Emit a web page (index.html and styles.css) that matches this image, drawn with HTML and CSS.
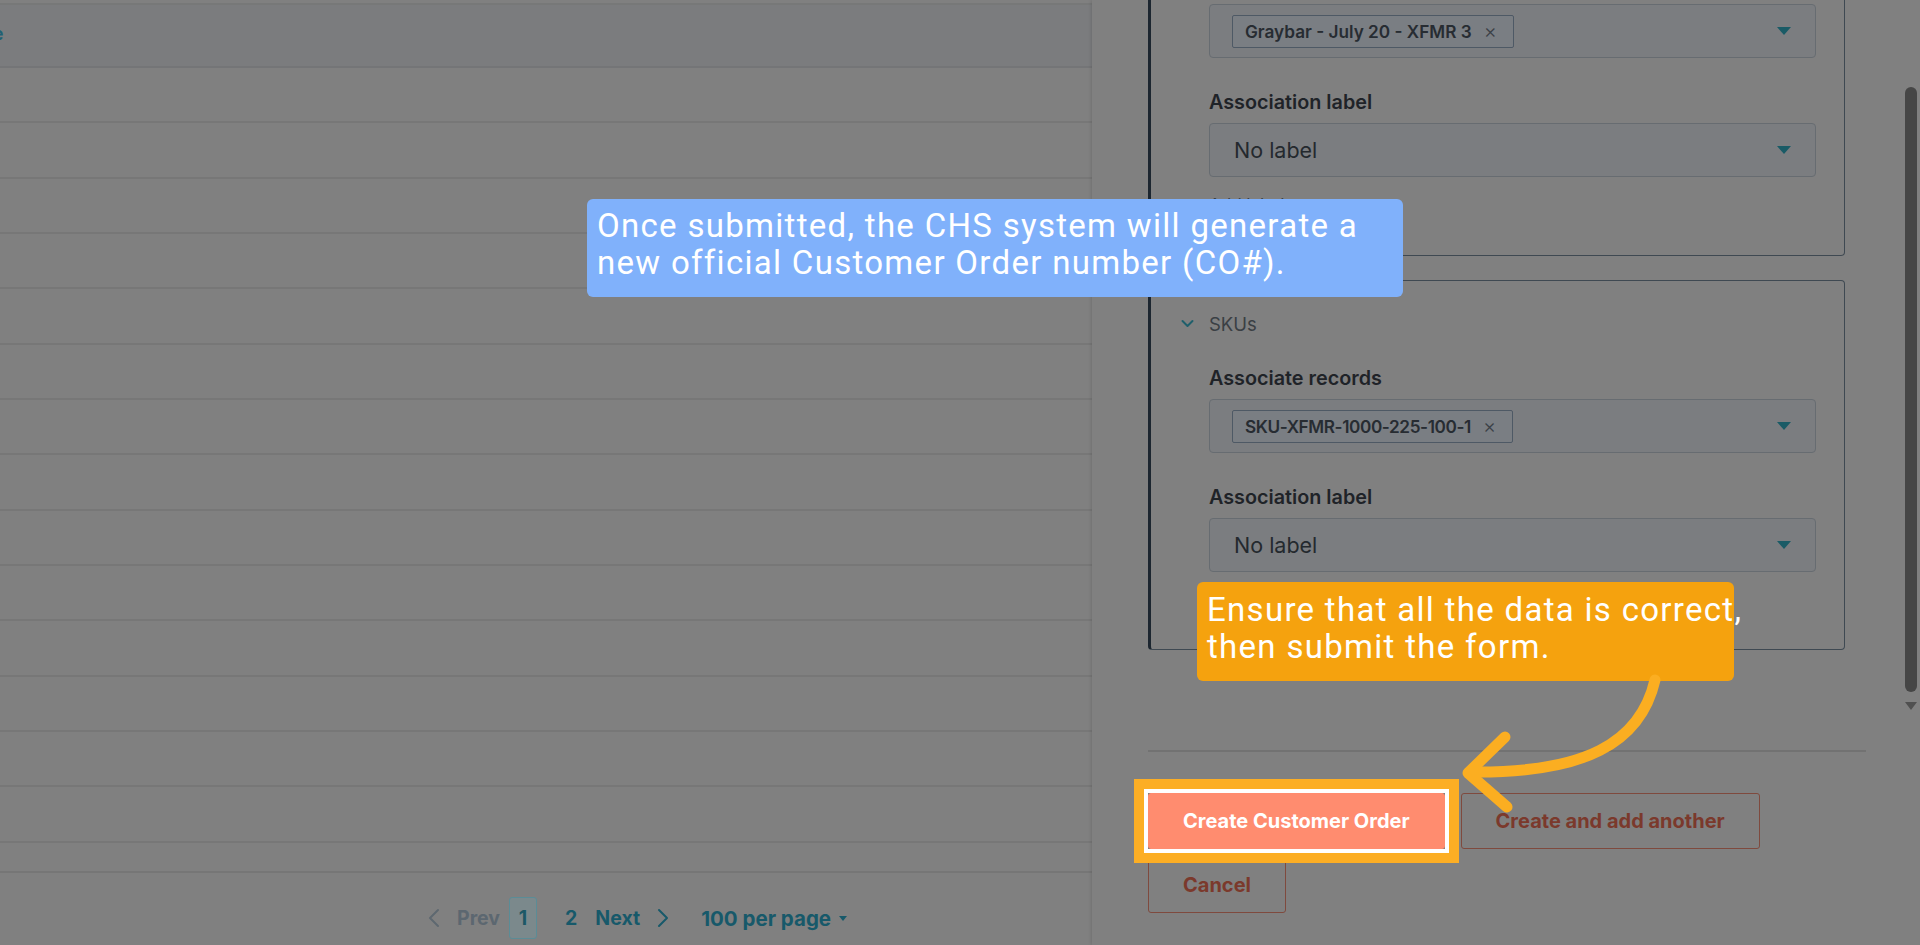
FILE: index.html
```html
<!DOCTYPE html>
<html lang="en">
<head>
<meta charset="utf-8">
<title>Create Customer Order</title>
<link rel="stylesheet" href="styles.css">
</head>
<body>
<div class="app">
  <main class="main">
    <div class="table">
      <div class="thead"><span class="th-cut">Name</span></div>
      <div class="row"></div><div class="row"></div><div class="row"></div><div class="row"></div>
      <div class="row"></div><div class="row"></div><div class="row"></div><div class="row"></div>
      <div class="row"></div><div class="row"></div><div class="row"></div><div class="row"></div>
      <div class="row"></div><div class="row"></div><div class="row"></div>
    </div>
    <nav class="pager">
      <svg class="chev chev-prev" viewBox="0 0 12 20" width="12" height="20"><path d="M10 2 L2 10 L10 18" fill="none" stroke="currentColor" stroke-width="2" stroke-linecap="round" stroke-linejoin="round"/></svg>
      <span class="pg-prev">Prev</span>
      <span class="pg-cur">1</span>
      <span class="pg-num">2</span>
      <span class="pg-next">Next</span>
      <svg class="chev chev-next" viewBox="0 0 12 20" width="12" height="20"><path d="M2 2 L10 10 L2 18" fill="none" stroke="currentColor" stroke-width="2" stroke-linecap="round" stroke-linejoin="round"/></svg>
      <span class="pg-size">100 per page</span>
      <span class="caret-sm"></span>
    </nav>
  </main>

  <aside class="panel">
    <div class="panel-body">
      <div class="scroll">
        <section class="assoc assoc-cut">
          <div class="select">
            <span class="tag">Graybar - July 20 - XFMR 3<span class="tag-x">×</span></span>
            <span class="tri"></span>
          </div>
          <div class="field-label">Association label</div>
          <div class="select">
            <span class="sel-text">No label</span>
            <span class="tri"></span>
          </div>
          <div class="sub-link">Add label</div>
        </section>

        <section class="assoc">
          <div class="assoc-head"><svg class="chev-down" viewBox="0 0 14 10" width="14" height="10"><path d="M2 2 L7 7 L12 2" fill="none" stroke="currentColor" stroke-width="2" stroke-linecap="round" stroke-linejoin="round"/></svg><span>SKUs</span></div>
          <div class="field-label first">Associate records</div>
          <div class="select">
            <span class="tag tag-sku">SKU-XFMR-1000-225-100-1<span class="tag-x">×</span></span>
            <span class="tri"></span>
          </div>
          <div class="field-label">Association label</div>
          <div class="select">
            <span class="sel-text">No label</span>
            <span class="tri"></span>
          </div>
          <div class="sub-spacer"></div>
        </section>
      </div>
      <div class="scrollbar">
        <div class="thumb"></div>
        <div class="sb-arrow"></div>
      </div>
    </div>
    <footer class="panel-foot">
      <div class="sep"></div>
      <div class="actions">
        <span class="hl"><button class="btn btn-primary">Create Customer Order</button></span>
        <button class="btn btn-secondary">Create and add another</button>
        <button class="btn btn-secondary">Cancel</button>
      </div>
    </footer>
  </aside>
</div>

<div class="tip tip-blue">Once submitted, the CHS system will generate a<br>new official Customer Order number (CO#).</div>
<div class="tip tip-orange">Ensure that all the data is correct,<br>then submit the form.</div>

<svg class="arrow" viewBox="1440 660 240 170" width="240" height="170">
  <path d="M1655 680 C1640 745 1582 772 1478 772" fill="none" stroke="#fbae21" stroke-width="11" stroke-linecap="round"/>
  <path d="M1505 737 L1468 773 L1507 807" fill="none" stroke="#fbae21" stroke-width="11" stroke-linecap="round" stroke-linejoin="round"/>
</svg>
</body>
</html>
```

FILE: styles.css
```css
* { box-sizing: border-box; }

html, body {
  margin: 0;
  padding: 0;
}

body {
  width: 1920px;
  height: 945px;
  overflow: hidden;
  position: relative;
  background: #808080;
  font-family: Inter, "Noto Sans", sans-serif;
  color: #23282d;
}

.app {
  display: flex;
  height: 945px;
}

/* ---------- left table ---------- */
.main {
  width: 1092px;
  flex: none;
  padding-top: 3px;
  display: flex;
  flex-direction: column;
}

.table {
  height: 870px;
  border-top: 2px solid #777878;
  border-bottom: 2px solid #767676;
  overflow: hidden;
}

.thead {
  height: 63px;
  background: #7b7c7e;
  border-bottom: 2px solid #747577;
  display: flex;
  align-items: center;
  font-size: 17px;
  font-weight: 700;
  color: #1f6174;
}

.th-cut {
  margin-left: -45px;
  margin-top: -4px;
}

.row {
  height: 55.33px;
  border-bottom: 2px solid #777777;
}

.pager {
  height: 72px;
  padding-top: 18px;
  display: flex;
  align-items: center;
  padding-left: 428px;
  font-size: 19.5px;
  font-weight: 700;
  color: #17596a;
}

.chev { display: block; }
.chev-prev { color: #5e6870; }
.pg-prev { margin-left: 17px; color: #5c6770; }

.pg-cur {
  margin-left: 9px;
  width: 28px;
  height: 42px;
  border: 1.5px solid #5b8c96;
  border-radius: 3px;
  background: #7b898c;
  display: flex;
  align-items: center;
  justify-content: center;
  color: #1c5866;
}

.pg-num { margin-left: 28px; }
.pg-next { margin-left: 18px; }
.chev-next { margin-left: 17px; }
.pg-size { margin-left: 32px; font-size: 20.5px; }

.caret-sm {
  margin-left: 8px;
  width: 0;
  height: 0;
  border-left: 4px solid transparent;
  border-right: 4px solid transparent;
  border-top: 5px solid #17596a;
}

/* ---------- right panel ---------- */
.panel {
  width: 828px;
  flex: none;
  background: #808080;
  box-shadow: -1px 0 3px rgba(0, 0, 0, 0.12);
  display: flex;
  flex-direction: column;
}

.panel-body {
  height: 716px;
  display: flex;
  overflow: hidden;
}

.scroll {
  flex: 1;
  padding: 0 58px 0 56px;
}

.assoc {
  border: 1px solid #3f4952;
  border-left: 3px solid #1c2630;
  border-radius: 4px;
  padding: 31px 28px 41px 58px;
  margin-bottom: 24px;
}

.assoc-cut {
  margin-top: -20px;
  padding-top: 23px;
  padding-bottom: 38px;
}

.assoc-head {
  height: 24px;
  margin-left: -29px;
  display: flex;
  align-items: center;
  gap: 14px;
  font-size: 18.5px;
  color: #3a3f44;
}

.chev-down {
  display: block;
  color: #1f5f6b;
  width: 15px;
}

.field-label {
  height: 24px;
  line-height: 24px;
  font-size: 19.8px;
  font-weight: 600;
  color: #1f2328;
  margin-top: 32px;
  margin-bottom: 9px;
}

.field-label.first { margin-top: 30px; }

.select {
  height: 54px;
  border: 1px solid #676c71;
  border-radius: 4px;
  background: #7b7d80;
  display: flex;
  align-items: center;
  justify-content: space-between;
  padding: 0 24px 0 22px;
}

.tag {
  height: 33px;
  display: flex;
  align-items: center;
  padding: 0 16px 0 12px;
  border: 1px solid #4e5965;
  border-radius: 2px;
  background: #7a7e83;
  font-size: 17.2px;
  font-weight: 600;
  color: #272c32;
}

.tag-sku { letter-spacing: -0.4px; }

.tag-x {
  margin-left: 12px;
  font-size: 20px;
  font-weight: 300;
  letter-spacing: 0;
  color: #3b4047;
}

.sel-text {
  padding-left: 2px;
  font-size: 21.5px;
  color: #24292e;
}

.tri {
  width: 0;
  height: 0;
  border-left: 7px solid transparent;
  border-right: 7px solid transparent;
  border-top: 8px solid #1a5b66;
}

.sub-link {
  height: 24px;
  line-height: 24px;
  margin-top: 16px;
  font-size: 17px;
  color: #3a4046;
}

.sub-spacer {
  height: 24px;
  margin-top: 12px;
}

.scrollbar {
  width: 17px;
  flex: none;
  padding-left: 2px;
}

.thumb {
  margin-top: 87px;
  width: 12px;
  height: 605px;
  border-radius: 6px;
  background: #464646;
}

.sb-arrow {
  margin-top: 10px;
  width: 0;
  height: 0;
  border-left: 6px solid transparent;
  border-right: 6px solid transparent;
  border-top: 8px solid #505050;
}

.panel-foot {
  padding-left: 56px;
}

.sep {
  width: 718px;
  height: 2px;
  margin-top: 34px;
  background: #727272;
}

.actions {
  width: 718px;
  margin-top: 41px;
  display: flex;
  flex-wrap: wrap;
  gap: 8px 16px;
}

.hl {
  position: relative;
  z-index: 1;
  display: block;
  box-shadow: 0 0 0 4px #ffffff, 0 0 0 14px #fcae24;
}

.btn {
  display: block;
  height: 56px;
  padding: 0 34px;
  border-radius: 3px;
  font-family: Inter, "Noto Sans", sans-serif;
  font-size: 20px;
  font-weight: 700;
  cursor: pointer;
}

.btn-primary {
  background: #ff8c6f;
  border: 1px solid #ff8c6f;
  color: #ffffff;
}

.btn-secondary {
  background: transparent;
  border: 1px solid #7f4a3e;
  color: #7b392c;
}

/* ---------- guide annotations ---------- */
.tip {
  position: absolute;
  z-index: 5;
  font-family: Roboto, "Liberation Sans", sans-serif;
  font-size: 33px;
  letter-spacing: 1.3px;
  line-height: 37px;
  color: #ffffff;
  white-space: nowrap;
  border-radius: 6px;
  padding: 8px 10px;
}

.tip-blue {
  left: 587px;
  top: 199px;
  width: 816px;
  height: 98px;
  background: #80b1fb;
}

.tip-orange {
  left: 1197px;
  top: 582px;
  width: 537px;
  height: 99px;
  padding-top: 9px;
  background: #f5a20e;
}

.arrow {
  position: absolute;
  z-index: 6;
  left: 1440px;
  top: 660px;
}
```
